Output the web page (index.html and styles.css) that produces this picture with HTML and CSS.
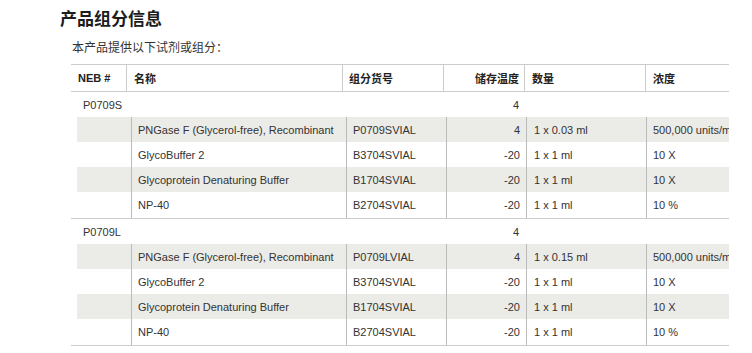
FILE: index.html
```html
<!DOCTYPE html>
<html lang="zh">
<head>
<meta charset="utf-8">
<link rel="stylesheet" href="styles.css">
</head>
<body>
<div class="page">
  <h1 class="title">产品组分信息</h1>
  <p class="intro">本产品提供以下试剂或组分：</p>
  <div class="clip">
    <div class="tbl">
      <div class="head">
        <div class="h c1">NEB #</div>
        <div class="h c2">名称</div>
        <div class="h c3">组分货号</div>
        <div class="h c4">储存温度</div>
        <div class="h c5">数量</div>
        <div class="h c6">浓度</div>
      </div>

      <div class="group">
        <div class="grow">
          <div class="gname">P0709S</div>
          <div class="gtemp">4</div>
        </div>
        <div class="sub">
          <div class="row alt"><div class="d1"></div><div class="d2">PNGase F (Glycerol-free), Recombinant</div><div class="d3">P0709SVIAL</div><div class="d4">4</div><div class="d5">1 x 0.03 ml</div><div class="d6">500,000 units/ml</div></div>
          <div class="row"><div class="d1"></div><div class="d2">GlycoBuffer 2</div><div class="d3">B3704SVIAL</div><div class="d4">-20</div><div class="d5">1 x 1 ml</div><div class="d6">10 X</div></div>
          <div class="row alt"><div class="d1"></div><div class="d2">Glycoprotein Denaturing Buffer</div><div class="d3">B1704SVIAL</div><div class="d4">-20</div><div class="d5">1 x 1 ml</div><div class="d6">10 X</div></div>
          <div class="row"><div class="d1"></div><div class="d2">NP-40</div><div class="d3">B2704SVIAL</div><div class="d4">-20</div><div class="d5">1 x 1 ml</div><div class="d6">10 %</div></div>
        </div>
      </div>

      <div class="group">
        <div class="grow">
          <div class="gname">P0709L</div>
          <div class="gtemp">4</div>
        </div>
        <div class="sub">
          <div class="row alt"><div class="d1"></div><div class="d2">PNGase F (Glycerol-free), Recombinant</div><div class="d3">P0709LVIAL</div><div class="d4">4</div><div class="d5">1 x 0.15 ml</div><div class="d6">500,000 units/ml</div></div>
          <div class="row"><div class="d1"></div><div class="d2">GlycoBuffer 2</div><div class="d3">B3704SVIAL</div><div class="d4">-20</div><div class="d5">1 x 1 ml</div><div class="d6">10 X</div></div>
          <div class="row alt"><div class="d1"></div><div class="d2">Glycoprotein Denaturing Buffer</div><div class="d3">B1704SVIAL</div><div class="d4">-20</div><div class="d5">1 x 1 ml</div><div class="d6">10 X</div></div>
          <div class="row"><div class="d1"></div><div class="d2">NP-40</div><div class="d3">B2704SVIAL</div><div class="d4">-20</div><div class="d5">1 x 1 ml</div><div class="d6">10 %</div></div>
        </div>
      </div>
    </div>
  </div>
</div>
</body>
</html>
```

FILE: styles.css
```css
* { box-sizing: border-box; }
html, body { margin: 0; padding: 0; background: #fff; }
body {
  font-family: "Liberation Sans", "Noto Sans CJK SC", Arial, sans-serif;
  color: #333;
}
.page { padding-left: 60px; }
.title {
  margin: 6px 0 0 0;
  font-family: "Noto Sans CJK SC", sans-serif;
  font-size: 17px;
  line-height: 24px;
  font-weight: 700;
  color: #1c1c1c;
}
.intro {
  margin: 8px 0 0 12px;
  font-family: "Noto Sans CJK SC", sans-serif;
  font-size: 12px;
  line-height: 18px;
  color: #333;
}
.clip {
  margin: 8px 0 0 11px;
  width: 658px;
  overflow: hidden;
}
.tbl { width: 800px; font-size: 11px; }

.head {
  display: flex;
  border-top: 1px solid #ccc;
  border-bottom: 1px solid #ccc;
  height: 28px;
  align-items: stretch;
}
.h {
  font-weight: 700;
  color: #222;
  display: flex;
  align-items: center;
  white-space: nowrap;
}
.h.c1 { width: 55px; padding-left: 7px; }
.h.c2 { width: 216px; border-left: 1px solid #ccc; padding-left: 7px; }
.h.c3 { width: 101px; border-left: 1px solid #ccc; padding-left: 6px; }
.h.c4 { width: 81px; border-left: 1px solid #ccc; justify-content: flex-end; padding-right: 5px; }
.h.c5 { width: 121px; border-left: 1px solid #ccc; padding-left: 7px; }
.h.c6 { width: 140px; border-left: 1px solid #ccc; padding-left: 7px; }

.group { border-bottom: 1px solid #ccc; }
.grow {
  display: flex;
  height: 25px;
  align-items: center;
}
.gname { width: 372px; padding-left: 12px; }
.gtemp { width: 80px; text-align: right; padding-right: 4px; }

.sub { margin-left: 6px; }
.row {
  display: flex;
  height: 25px;
  white-space: nowrap;
}
.row:last-child { height: 26px; }
.row.alt { background: #ebebe8; }
.row > div {
  display: flex;
  align-items: center;
  overflow: hidden;
}
.d1 { width: 54px; }
.d2 { width: 215px; border-left: 1px solid #bbb; padding-left: 6px; }
.d3 { width: 100px; border-left: 1px solid #bbb; padding-left: 6px; }
.d4 { width: 80px; border-left: 1px solid #bbb; justify-content: flex-end; padding-right: 6px; }
.d5 { width: 120px; border-left: 1px solid #bbb; padding-left: 7px; }
.d6 { width: 140px; border-left: 1px solid #bbb; padding-left: 6px; }
```
